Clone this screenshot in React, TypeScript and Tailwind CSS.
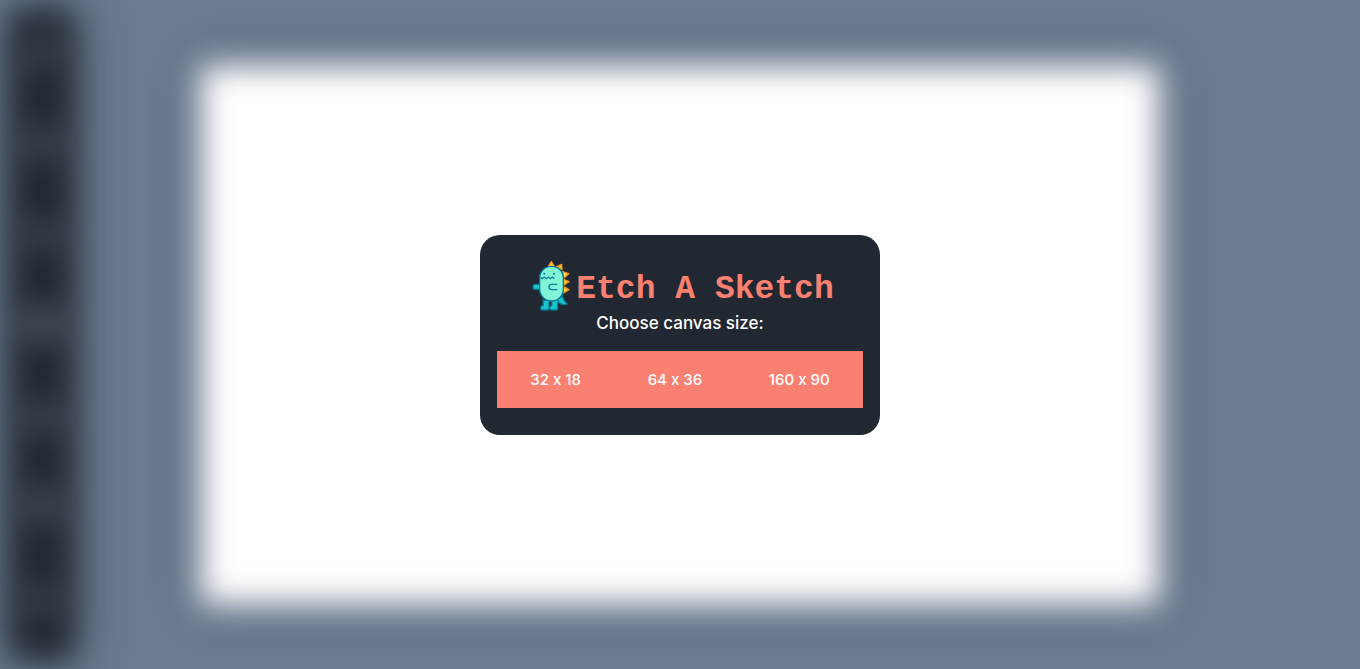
import { Brush, Download, Eraser, Grid3x3, Palette, Rainbow, Trash2 } from "lucide-react";

const tools = [
  { label: "Brush", Icon: Brush },
  { label: "Palette", Icon: Palette },
  { label: "Rainbow", Icon: Rainbow },
  { label: "Grid", Icon: Grid3x3 },
  { label: "Eraser", Icon: Eraser },
  { label: "Clear", Icon: Trash2 },
  { label: "Download", Icon: Download },
];

const sizes = ["32 x 18", "64 x 36", "160 x 90"];

function Dino() {
  return (
    <svg viewBox="15 33 150 150" className="size-[50px] shrink-0" aria-hidden="true">
      <g fill="#ffd84a" stroke="#f7941d" strokeWidth="4" strokeLinejoin="round">
        <path d="M82 49 91 35 100 49Z" />
        <path d="M107 50 122 43 123 59Z" />
        <path d="M125 65 143 71 129 84Z" />
        <path d="M127 88 144 95 129 105Z" />
        <path d="M128 110 144 119 128 129Z" />
      </g>
      <g fill="#17c6c7" stroke="#067c9c" strokeWidth="4" strokeLinejoin="round">
        <path d="M56 103H42q-6 0-6 8t6 7h15Z" />
        <path d="M108 151 124 137q4 17 15 25-17 7-31-11Z" />
        <path d="M66 151h18v24q0 5-6 5H65q-6 0-6-6t8-8Z" />
        <path d="M92 151h18v24q0 5-5 5H91q-5 0-5-5t6-9Z" />
      </g>
      <rect x="56" y="49" width="71" height="104" rx="35" fill="#82f5d6" stroke="#067c9c" strokeWidth="4" />
      <path d="M58 82 64 86 70 81 76 86 82 81 88 86 94 81 100 86" fill="none" stroke="#067c9c" strokeWidth="4" />
      <path d="M109 103H92q-8 0-8 8t8 8h17" fill="none" stroke="#067c9c" strokeWidth="4" />
      <circle cx="70" cy="71" r="3" fill="#067c9c" />
      <circle cx="99" cy="71" r="3" fill="#067c9c" />
    </svg>
  );
}

export default function App() {
  return (
    <div className="relative min-h-screen overflow-hidden bg-[#697a91] font-['Inter','Open_Sans',sans-serif]">
      <div className="grid min-h-screen grid-cols-[68px_1fr_68px] items-center gap-2 px-2 blur-[16px]">
        <aside className="flex h-[calc(100vh-16px)] flex-col justify-around rounded-2xl bg-[#222831] pb-5 shadow-[0_0_40px_rgba(0,0,0,0.35)]">
          {tools.map(({ label, Icon }) => (
            <button key={label} type="button" aria-label={label} className="flex justify-center text-gray-400">
              <Icon className="size-8" />
            </button>
          ))}
        </aside>
        <main className="mx-auto aspect-video w-full max-w-[960px] bg-white shadow-[0_0_30px_rgba(0,0,0,0.3)]" />
      </div>

      <div className="absolute inset-0 flex items-center justify-center">
        <section
          role="dialog"
          aria-labelledby="title"
          className="flex w-[400px] flex-col items-center rounded-[20px] bg-[#222831] px-4 pt-[26px] pb-[27px] text-white"
        >
          <header className="flex h-[50px] items-center">
            <Dino />
            <h1
              id="title"
              className="pt-2 font-['Liberation_Mono',monospace] text-[33px] leading-[40px] font-bold whitespace-nowrap text-[#fa8072]"
            >
              Etch A Sketch
            </h1>
          </header>
          <p className="text-[17px] leading-6 font-medium">Choose canvas size:</p>
          <div className="mt-4 flex w-[366px] max-w-full bg-[#fa8072]">
            {sizes.map((size) => (
              <button
                key={size}
                type="button"
                className="flex-auto px-6 py-4 text-[15px] leading-[25px] font-medium whitespace-nowrap [font-feature-settings:'calt'_0]"
              >
                {size}
              </button>
            ))}
          </div>
        </section>
      </div>
    </div>
  );
}
